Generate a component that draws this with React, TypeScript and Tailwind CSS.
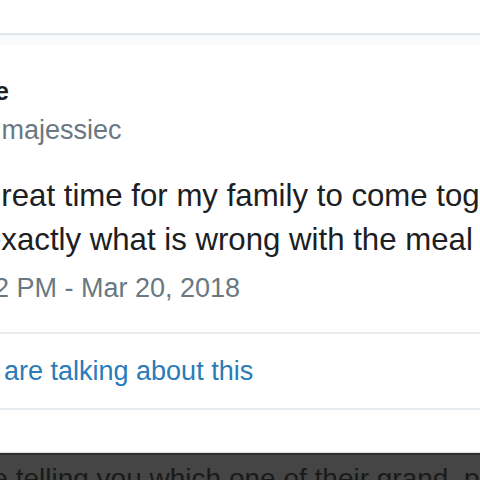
export default function App() {
  return (
    <div className="w-[480px] h-[480px] overflow-hidden bg-white font-['Liberation_Sans',Arial,sans-serif]">
      {/* card top edge */}
      <div className="h-[33px]" />
      <div className="h-[2px] bg-[#e1e8ed]" />
      <div className="h-[10px] bg-[#f9fafb]" />

      {/* author */}
      <div className="mt-[31px] whitespace-nowrap">
        <div className="w-[9px] flex justify-end text-[25px] leading-[30px] font-bold text-[#1c2022]">
          <span>Mama Jessie</span>
        </div>
        <div className="mt-[8px] ml-[-26px] text-[27px] leading-[32px] text-[#697882]">@majessiec</div>
      </div>

      {/* tweet body */}
      <div className="mt-[28px] whitespace-nowrap text-[31.2px] leading-[44px] text-[#1c2022]">
        <p className="ml-[-16px]">great time for my family to come together</p>
        <p className="ml-[-16px]">exactly what is wrong with the meal I made</p>
      </div>
      <div className="mt-[10px] ml-[-6px] whitespace-nowrap text-[27px] leading-[32px] text-[#697882]">
        2 PM - Mar 20, 2018
      </div>

      {/* footer link */}
      <div className="mt-[28px] border-t-2 border-b-2 border-[#e6ecf0] py-[21px]">
        <a className="block ml-[4px] whitespace-nowrap text-[27px] leading-[32px] text-[#2b7bb9]">
          are talking about this
        </a>
      </div>

      {/* caption bar */}
      <div className="mt-[42px] h-px bg-[#dedede]" />
      <div className="h-[40px] border-t-2 border-[#2e2e2e] bg-[#454545] pt-[7px] overflow-hidden">
        <p className="ml-[-17px] whitespace-nowrap text-[28px] leading-[34px] text-[#1a1a1a]">
          re telling you which one of their grand, probably
        </p>
      </div>
    </div>
  );
}
